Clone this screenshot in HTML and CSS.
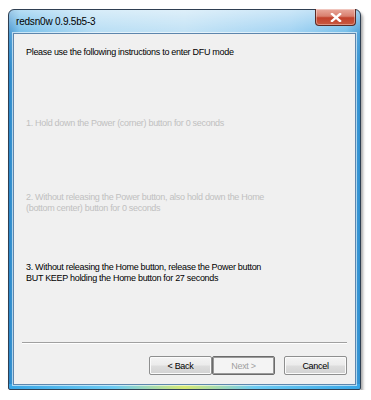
FILE: index.html
```html
<!DOCTYPE html>
<html>
<head>
<meta charset="utf-8">
<link rel="stylesheet" href="styles.css">
</head>
<body>
<div class="window">
  <div class="titlebar">
    <span class="title">redsn0w 0.9.5b5-3</span>
    <div class="close"><svg width="12" height="9" viewBox="0 0 12 9"><path d="M2 1 L10 8 M10 1 L2 8" stroke="#fff" stroke-width="2.4" stroke-linecap="square"/></svg></div>
  </div>
  <div class="client">
    <div class="steps">
      <p class="intro">Please use the following instructions to enter DFU mode</p>
      <p class="step s1 off">1. Hold down the Power (corner) button for 0 seconds</p>
      <p class="step s2 off">2. Without releasing the Power button, also hold down the Home<br>(bottom center) button for 0 seconds</p>
      <p class="step s3">3. Without releasing the Home button, release the Power button<br>BUT KEEP holding the Home button for 27 seconds</p>
    </div>
    <div class="footer">
      <div class="sep"></div>
      <div class="buttons">
        <button class="btn">&lt; Back</button>
        <button class="btn default" disabled>Next &gt;</button>
        <button class="btn cancel">Cancel</button>
      </div>
    </div>
  </div>
</div>
</body>
</html>
```
FILE: styles.css
```css
html, body { margin: 0; padding: 0; background: #fff; }
body { font-family: "Liberation Sans", Arial, sans-serif; font-size: 9px; }
.window {
  position: relative;
  margin: 9px 0 0 8px;
  width: 353px;
  height: 381px;
  box-sizing: border-box;
  border: 1px solid #2f3f52;
  border-radius: 6px 6px 2px 2px;
  background:
    linear-gradient(180deg, rgba(255,255,255,0.55) 0px, rgba(255,255,255,0.15) 24px, rgba(255,255,255,0) 60px),
    linear-gradient(90deg, #2a86c8 0%, #5ab2e6 3%, #a9d7f2 25%, #b5dcf3 50%, #8fcaf0 80%, #5cb3e6 96%, #2f8fd0 100%);
  box-shadow: 2px 3px 3px rgba(0,0,0,0.35);
  display: flex;
  flex-direction: column;
  padding: 0 4px 4px 4px;
}
.window::before {
  content: "";
  position: absolute; left: 0; right: 0; bottom: 0; height: 5px;
  background: linear-gradient(90deg, #39a6e6 0%, #6ccaf2 30%, #d6e872 50%, #6ccaf2 70%, #39a6e6 100%);
  border-radius: 0 0 2px 2px;
}
.titlebar {
  height: 23px;
  display: flex;
  align-items: center;
  padding-left: 3px;
  position: relative;
}
.title { color: #000; font-size: 10px; letter-spacing: -0.2px; }
.close {
  position: absolute;
  right: 0px; top: -1px;
  width: 39px; height: 16px;
  border: 1px solid #5a2a24;
  border-top: none;
  border-radius: 0 0 4px 4px;
  background: linear-gradient(#e9a99d 0%, #d9806f 45%, #c2412c 55%, #c95a40 100%);
  display: flex; align-items: center; justify-content: center;
  box-shadow: inset 0 0 0 1px rgba(255,255,255,0.35);
}
.client {
  position: relative;
  flex: 1;
  border: 1px solid #5d86ad;
  background: #f0f0f0;
  box-shadow: 0 0 0 1px rgba(255,255,255,0.6);
  display: flex;
  flex-direction: column;
  z-index: 1;
}
.steps { flex: 1; padding: 13px 0 0 12px; }
p { margin: 0; line-height: 11px; white-space: nowrap; letter-spacing: -0.3px; }
.off { color: #c0c0c0; }
.s1 { margin-top: 60px; }
.s2 { margin-top: 63px; }
.s3 { margin-top: 48px; }
.footer { padding: 0 8px 9px 8px; }
.sep { height: 1px; background: #a0a0a0; border-bottom: 1px solid #fff; margin-bottom: 12px; }
.buttons { display: flex; justify-content: flex-end; }
.btn {
  width: 63px; height: 19px;
  font-family: inherit; font-size: 9px; letter-spacing: -0.3px;
  color: #000;
  border: 1px solid #8e8f8f;
  border-radius: 2px;
  background: linear-gradient(#f4f4f4 0%, #ececec 45%, #dddddd 55%, #d2d2d2 100%);
  padding: 0;
  box-shadow: inset 0 0 0 1px #fbfbfb;
}
.default { border: 1px solid #6b6b6b; box-shadow: inset 0 0 0 1px #9a9a9a; color: #a0a0a0; background: #f4f4f4; }
.cancel { margin-left: 9px; }
```
